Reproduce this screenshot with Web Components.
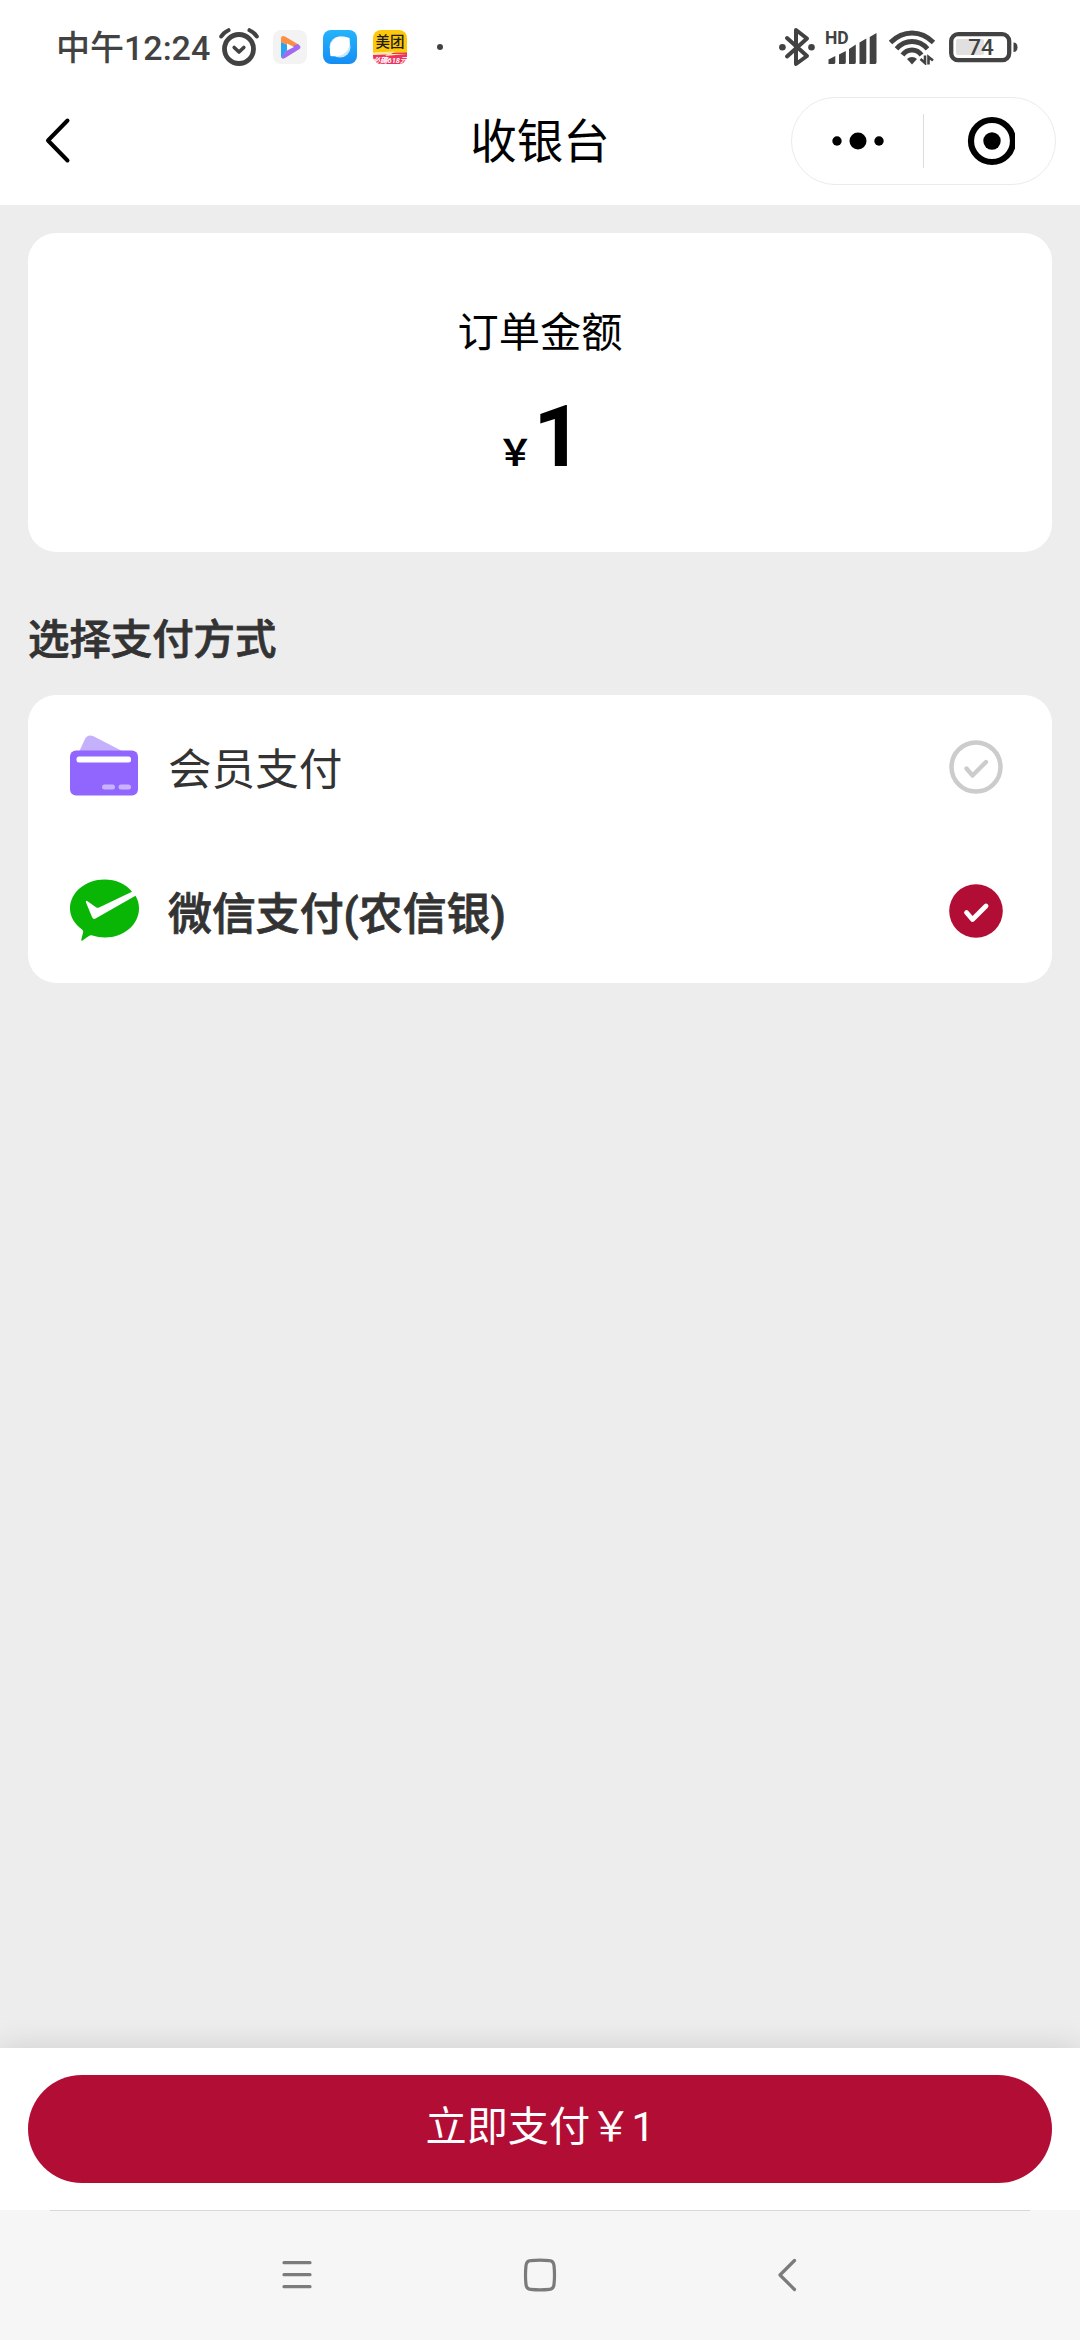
<!DOCTYPE html>
<html lang="zh-CN">
<head>
<meta charset="utf-8">
<title>收银台</title>
<style>
  body {
    margin: 0;
    width: 1080px;
    height: 2340px;
    overflow: hidden;
    font-family: Roboto, "Noto Sans CJK SC", sans-serif;
    background: #ededed;
    color: #333;
    --brand: #b20e35;
  }
</style>
</head>
<body>
<cashier-page>
  <status-bar slot="top" time="中午12:24" battery="74"></status-bar>
  <title-bar slot="top">收银台</title-bar>

  <amount-card value="1">订单金额</amount-card>
  <option-list heading="选择支付方式">
    <pay-option>
      <svg slot="icon" width="68" height="61" viewBox="0 0 68 61">
        <path d="M9 17 L15 4 Q17.500 -1 23 1 L54 17Z" fill="#c5b0fb"/>
        <rect y="15.500" width="68" height="45" rx="6" fill="#9066ff"/>
        <rect x="6.500" y="21.500" width="54.500" height="6" rx="2.500" fill="#fff"/>
        <rect x="32" y="49.500" width="13" height="5" rx="2.500" fill="#c9b3ff"/>
        <rect x="48.500" y="49.500" width="12.500" height="5" rx="2.500" fill="#c9b3ff"/>
      </svg>
      会员支付
    </pay-option>
    <pay-option checked>
      <svg slot="icon" width="70" height="63" viewBox="0 0 70 63">
        <path d="M34.500 0.500 C46 0.500 56 5 62 12.800 L29 28.500 Q27.500 29.300 26 28.200 L17.500 22.300 Q15.300 21 16 23.500 L22 38 Q23.200 41 26 39.300 L65.500 16.800 C67.800 20.500 69 25 69 29.500 C69 45.500 54 58.500 35 58.500 C31 58.500 26 57.600 22.500 56.500 Q20.500 55.900 18.500 57.200 L12.500 61.600 Q11 62.400 11.300 60.500 L13.200 53 Q13.500 51.500 12 50.500 C4.500 45 0 37.500 0 29.500 C0 13.500 15.500 0.500 34.500 0.500Z" fill="#09b606"/>
      </svg>
      微信支付(农信银)
    </pay-option>
  </option-list>

  <pay-footer slot="bottom">立即支付￥1</pay-footer>
  <system-nav slot="bottom"></system-nav>
</cashier-page>

<script>
// Attach an open shadow root and fill it with the given markup
function render(el, html) {
  el.attachShadow({ mode: "open" }).innerHTML = html;
}

// Page frame: fixed top and bottom, content in between
class CashierPage extends HTMLElement {
  connectedCallback() {
    render(this, `
      <style>
        :host {
          display: flex;
          flex-direction: column;
          height: 2340px;
        }

        main {
          flex: 1;
          padding: 28px 28px 0;
        }
      </style>
      <header><slot name="top"></slot></header>
      <main><slot></slot></main>
      <footer><slot name="bottom"></slot></footer>
    `);
  }
}

// Android status bar
class StatusBar extends HTMLElement {
  connectedCallback() {
    render(this, `
      <style>
        :host {
          display: flex;
          justify-content: space-between;
          height: 94px;
          padding: 0 62px 0 56px;
          box-sizing: border-box;
          background: #fff;
          color: #424242;
        }

        div {
          display: flex;
          align-items: center;
        }

        .time {
          font-size: 34px;
          font-weight: 500;
          line-height: 40px;
          padding-top: 2px;
          width: 159px;
          white-space: nowrap;
        }

        svg {
          display: block;
          flex: none;
        }

        .apps {
          gap: 16px;
          margin: 0 30px 0 14px;
        }

        .dot {
          width: 6px;
          height: 6px;
          border-radius: 50%;
          background: #424242;
        }
      </style>
      <div>
        <span class="time">${this.getAttribute("time")}</span>
        <svg style="margin-left:4px" width="40" height="40" viewBox="0 0 40 40" fill="none" stroke="#424242" stroke-linecap="round" stroke-linejoin="round">
          <circle cx="20" cy="22" r="14.500" stroke-width="4.800"/>
          <path d="M15.200 20.500 L20 25 L24.800 20.500" stroke-width="3.600"/>
          <path d="M2.200 9.500 Q4.500 5.500 9.500 3.200 M30.500 3.200 Q35.500 5.500 37.800 9.500" stroke-width="4"/>
        </svg>
        <div class="apps">
          <svg width="34" height="34" viewBox="0 0 34 34">
            <rect width="34" height="34" rx="8" fill="#f3f3f4"/>
            <path d="M8 12 L14 14.500 V20 L9 28 Q8 27.500 8 26Z" fill="#29a5ef"/>
            <path d="M8 9 Q8 5 12 6.500 L25.500 14.500 L23 19.500 L8 12Z" fill="#fb9045"/>
            <path d="M8.500 27.500 L15 18.500 L21 15.500 L25 14 Q29 17 26.500 19 L12 28 Q9 29.500 8.500 27.500Z" fill="#a26af0"/>
            <path d="M14 13.500 L21 17 L14 20.500Z" fill="#fff"/>
          </svg>
          <svg width="34" height="34" viewBox="0 0 34 34">
            <defs>
              <linearGradient id="sky" x1="0" y1="0" x2="0" y2="1">
                <stop offset="0" stop-color="#24b4fb"/>
                <stop offset="1" stop-color="#158df4"/>
              </linearGradient>
            </defs>
            <rect width="34" height="34" rx="8" fill="url(#sky)"/>
            <circle cx="17" cy="17" r="10.500" fill="#c9e6fc"/>
            <path d="M7.500 26 C5.500 16 9 7 17 6.500 C21 6.200 24 7 26.500 8 C28 16 24 24 17 25.500 C13.500 26.500 10 26.500 7.500 26Z" fill="#fff"/>
          </svg>
          <svg width="34" height="34" viewBox="0 0 34 34">
            <clipPath id="tile"><rect width="34" height="34" rx="8"/></clipPath>
            <g clip-path="url(#tile)">
              <rect width="34" height="34" fill="#fdc80b"/>
              <path d="M0 23.500 L34 22.500 V34 H0Z" fill="#ee3161"/>
              <path d="M0 22.500 L22 21.500 L18 24 H34 L12 26 L14 24.500 L0 25Z" fill="#ffe9a8"/>
            </g>
            <text x="17" y="16.500" text-anchor="middle" font-size="14.500" font-weight="500" fill="#221c10">美团</text>
            <text x="17" y="33" text-anchor="middle" font-size="7.500" font-weight="700" font-style="italic" fill="#fff">必薅618元</text>
          </svg>
        </div>
        <span class="dot"></span>
      </div>
      <div>
        <svg width="36" height="40" viewBox="0 0 36 40" fill="none" stroke="#424242" stroke-width="4" stroke-linejoin="round" stroke-linecap="round">
          <path d="M8 11 L28 29 L17 37 V3 L28 11.500 L8 29.500"/>
          <circle cx="3.400" cy="20.300" r="3.300" fill="#424242" stroke="none"/>
          <circle cx="32.500" cy="20.300" r="3.300" fill="#424242" stroke="none"/>
        </svg>
        <svg style="margin-left:10px" width="52" height="36" viewBox="0 0 52 36" fill="#424242">
          <text x="0" y="15" font-size="17.500" font-weight="700">HD</text>
          <path d="M3.500 35 V30.500 L10.300 27 V33.500 Q10.300 35 8.500 35Z M14 35 V25.500 L20.800 22 V33.500 Q20.800 35 19 35Z M24 35 V20 L30.800 15.500 V33.500 Q30.800 35 29 35Z M34.500 35 V13.500 L41.300 9.500 V33.500 Q41.300 35 39.500 35Z M44.700 35 V8 L51.500 4 V33.500 Q51.500 35 49.500 35Z"/>
        </svg>
        <svg style="margin-left:12px" width="48" height="36" viewBox="0 0 48 36" fill="none" stroke="#424242" stroke-width="4.800">
          <path d="M1.500 13.500 Q11 4 23 4 Q35 4 44.500 13.500"/>
          <path d="M7.500 19.800 Q14 12.500 23 12.500 Q32 12.500 38.500 19.800"/>
          <path d="M13.500 26 Q17 21 23 21 Q29 21 32.500 26"/>
          <path d="M23 28 Q26 28 28 30 L23 35.500 L18 30 Q20 28 23 28Z" fill="#424242" stroke="none"/>
          <path d="M31.500 30 L36 34 V26.500 M44 31.500 L39.500 28 V35.500" stroke-width="2.600"/>
        </svg>
        <svg style="margin-left:12px" width="69" height="32" viewBox="0 0 69 32">
          <rect x="7" y="8" width="28" height="16" rx="2" fill="#e0e0e0"/>
          <rect x="2.200" y="3.200" width="58" height="26" rx="7" fill="none" stroke="#424242" stroke-width="4.300"/>
          <path d="M64.500 11.500 q4 0 4 4.700 t-4 4.700Z" fill="#424242"/>
          <text x="32" y="24" text-anchor="middle" font-size="22.500" font-weight="500" fill="#424242">${this.getAttribute("battery")}</text>
        </svg>
      </div>
    `);
  }
}

// Mini program title bar with back arrow and capsule
class TitleBar extends HTMLElement {
  connectedCallback() {
    render(this, `
      <style>
        :host {
          display: grid;
          grid-template-columns: 1fr auto 1fr;
          align-items: center;
          height: 111px;
          padding: 0 24px 18px;
          box-sizing: border-box;
          background: #fff;
          color: #000;
        }

        svg {
          margin-left: 20px;
        }

        h1 {
          margin: 0;
          padding-top: 3px;
          font-size: 46.500px;
          font-weight: 400;
          line-height: 60px;
        }

        capsule-menu {
          justify-self: end;
        }
      </style>
      <svg width="28" height="50" viewBox="0 0 28 50" fill="none" stroke="#000" stroke-width="4" stroke-linecap="round" stroke-linejoin="round">
        <path d="M23.500 4.500 L4 24.500 L23.500 44.500"/>
      </svg>
      <h1><slot></slot></h1>
      <capsule-menu></capsule-menu>
    `);
  }
}

class CapsuleMenu extends HTMLElement {
  connectedCallback() {
    render(this, `
      <style>
        :host {
          display: flex;
          align-items: center;
          width: 265px;
          height: 88px;
          border: 1.500px solid #ebebeb;
          border-radius: 44px;
          box-sizing: border-box;
        }

        div {
          flex: 1;
          display: flex;
          justify-content: center;
        }

        div + div {
          border-left: 1px solid #dcdcdc;
          padding: 2px 0;
        }
      </style>
      <div>
        <svg width="54" height="20" viewBox="0 0 54 20">
          <circle cx="6" cy="10" r="4.700"/>
          <circle cx="27" cy="10" r="8.500"/>
          <circle cx="48" cy="10" r="4.700"/>
        </svg>
      </div>
      <div>
        <svg width="50" height="50" viewBox="0 0 50 50">
          <circle cx="27" cy="25" r="21" fill="none" stroke="#000" stroke-width="6.200"/>
          <circle cx="27" cy="25" r="8.700"/>
        </svg>
      </div>
    `);
  }
}

class AmountCard extends HTMLElement {
  connectedCallback() {
    render(this, `
      <style>
        :host {
          display: flex;
          flex-direction: column;
          align-items: center;
          height: 319px;
          padding-top: 70px;
          box-sizing: border-box;
          border-radius: 28px;
          background: #fff;
          color: #000;
        }

        .label {
          font-size: 41.200px;
          line-height: 60px;
        }

        .price {
          display: flex;
          align-items: baseline;
          margin-top: 24px;
          font-size: 86px;
          font-weight: 700;
          line-height: 100px;
        }

        .price small {
          font-size: 36px;
          font-weight: 700;
        }
      </style>
      <div class="label"><slot></slot></div>
      <div class="price"><small>￥</small><span>${this.getAttribute("value")}</span></div>
    `);
  }
}

class OptionList extends HTMLElement {
  connectedCallback() {
    render(this, `
      <style>
        :host {
          display: block;
        }

        h2 {
          margin: 0;
          padding: 58px 0 25px;
          font-size: 41.400px;
          font-weight: 500;
          line-height: 60px;
          -webkit-text-stroke: 0.800px currentColor;
        }

        section {
          border-radius: 28px;
          background: #fff;
        }
      </style>
      <h2>${this.getAttribute("heading")}</h2>
      <section><slot></slot></section>
    `);
  }
}

class PayOption extends HTMLElement {
  connectedCallback() {
    render(this, `
      <style>
        :host {
          display: flex;
          align-items: center;
          height: 144px;
          padding: 0 49px 0 42px;
          box-sizing: border-box;
          font-size: 43.600px;
          line-height: 60px;
        }

        :host([checked]) {
          font-size: 43.900px;
          font-weight: 500;
          -webkit-text-stroke: 0.800px currentColor;
        }

        .icon {
          width: 70px;
          height: 64px;
          margin-right: 28px;
        }

        .label {
          flex: 1;
          padding-top: 8px;
        }

        .on, :host([checked]) .off {
          display: none;
        }

        :host([checked]) .on {
          display: block;
        }
      </style>
      <span class="icon"><slot name="icon"></slot></span>
      <span class="label"><slot></slot></span>
      <svg width="54" height="54" viewBox="0 0 54 54" fill="none" stroke-linecap="round" stroke-linejoin="round">
        <g class="off" stroke="#ccc">
          <circle cx="27" cy="27" r="24.500" stroke-width="4.500"/>
          <path d="M17.500 28.500 L23.500 35.500 L37 22" stroke-width="4.300"/>
        </g>
        <g class="on">
          <circle cx="27" cy="27" r="26.800" fill="var(--brand)"/>
          <path d="M17.500 28.500 L23.500 35.500 L37 22" stroke="#fff" stroke-width="4.800"/>
        </g>
      </svg>
    `);
  }
}

class PayFooter extends HTMLElement {
  connectedCallback() {
    render(this, `
      <style>
        :host {
          display: block;
          padding: 27px 28px;
          background: #fff;
          box-shadow: 0 -2px 28px rgba(0, 0, 0, 0.12);
        }

        button {
          display: block;
          width: 100%;
          height: 108px;
          padding: 0 0 5px;
          border: 0;
          border-radius: 54px;
          background: var(--brand);
          color: #fff;
          font: inherit;
          font-size: 41.200px;
          line-height: 60px;
        }
      </style>
      <button><slot></slot></button>
    `);
  }
}

// Android three-button navigation
class SystemNav extends HTMLElement {
  connectedCallback() {
    render(this, `
      <style>
        :host {
          display: block;
          position: relative;
          height: 130px;
          background: #f6f6f6;
        }

        hr {
          margin: 0 50px;
          height: 1px;
          border: 0;
          background: #d8d8d8;
        }

        nav {
          display: grid;
          grid-template-columns: repeat(3, 245px);
          justify-content: center;
          justify-items: center;
          padding-top: 46px;
        }
      </style>
      <hr>
      <nav>
        <svg width="36" height="36" viewBox="0 0 36 36" fill="none" stroke="#7b7b7b" stroke-width="3.200" stroke-linecap="round">
          <path d="M7 5.700 H33 M7 17.700 H33 M7 29.700 H33"/>
        </svg>
        <svg width="36" height="36" viewBox="0 0 36 36" fill="none" stroke="#7b7b7b" stroke-width="3.200">
          <path d="M8.500 3.700 Q18 2.700 27.500 3.700 Q31.500 4 32 8.500 Q33 18 32 27.500 Q31.500 32 27.500 32.300 Q18 33.300 8.500 32.300 Q4.500 32 4 27.500 Q3 18 4 8.500 Q4.500 4 8.500 3.700Z"/>
        </svg>
        <svg width="36" height="36" viewBox="0 0 36 36" fill="none" stroke="#7b7b7b" stroke-width="3.200" stroke-linecap="round" stroke-linejoin="round">
          <path d="M27.500 3.500 L13 18 L27.500 32.500"/>
        </svg>
      </nav>
    `);
  }
}

customElements.define("cashier-page", CashierPage);
customElements.define("status-bar", StatusBar);
customElements.define("title-bar", TitleBar);
customElements.define("capsule-menu", CapsuleMenu);
customElements.define("amount-card", AmountCard);
customElements.define("option-list", OptionList);
customElements.define("pay-option", PayOption);
customElements.define("pay-footer", PayFooter);
customElements.define("system-nav", SystemNav);
</script>
</body>
</html>
